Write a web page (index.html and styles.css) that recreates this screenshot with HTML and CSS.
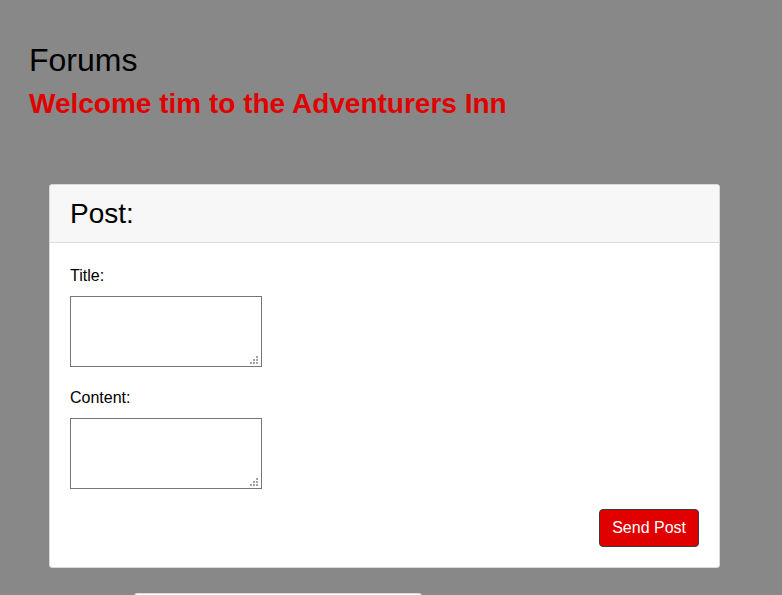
FILE: index.html
```html
<!DOCTYPE html>
<html>
<head>
<meta charset="utf-8">
<title>Forums</title>
<link rel="stylesheet" href="styles.css">
</head>
<body>
<div class="page">
  <h1 class="title">Forums</h1>
  <h2 class="welcome">Welcome tim to the Adventurers Inn</h2>
  <div class="card">
    <div class="card-header">Post:</div>
    <form class="card-body">
      <label class="label" for="t">Title:</label>
      <textarea id="t" class="field"></textarea>
      <label class="label label-second" for="c">Content:</label>
      <textarea id="c" class="field"></textarea>
      <div class="actions">
        <button type="button" class="send">Send Post</button>
      </div>
    </form>
  </div>
  <div class="next-card"></div>
</div>
</body>
</html>
```
FILE: styles.css
```css
html, body {
  margin: 0;
  padding: 0;
  background: #888888;
  height: 100%;
  overflow: hidden;
}
body {
  font-family: "Liberation Sans", Arial, sans-serif;
  color: #000;
}
.page {
  padding-left: 29px;
}
.title {
  margin: 42px 0 0;
  font-size: 32px;
  line-height: 37px;
  font-weight: normal;
}
.welcome {
  margin: 9px 0 0;
  font-size: 28px;
  line-height: 32px;
  font-weight: bold;
  color: #e00000;
}
.card {
  margin: 64px 0 0 20px;
  width: 671px;
  box-sizing: border-box;
  background: #fff;
  border: 1px solid #d9d9d9;
  border-radius: 3px;
  overflow: hidden;
}
.card-header {
  background: #f7f7f7;
  border-bottom: 1px solid #dcdcdc;
  padding: 13px 20px 12px;
  font-size: 28px;
  line-height: 32px;
}
.card-body {
  padding: 24px 20px 20px;
  margin: 0;
}
.label {
  display: block;
  font-size: 16px;
  line-height: 18px;
}
.label-second {
  margin-top: 22px;
}
.field {
  display: block;
  margin-top: 11px;
  width: 192px;
  height: 71px;
  box-sizing: border-box;
  border: 1px solid #767676;
  padding: 2px;
  font-family: "Liberation Mono", monospace;
  font-size: 13px;
  resize: none;
  background-color: #fff;
  background-image: url("data:image/svg+xml,%3Csvg xmlns='http://www.w3.org/2000/svg' width='8' height='8'%3E%3Cg fill='%23a3a3a3'%3E%3Crect x='6' y='0' width='2' height='2'/%3E%3Crect x='3' y='3' width='2' height='2'/%3E%3Crect x='6' y='3' width='2' height='2'/%3E%3Crect x='0' y='6' width='2' height='2'/%3E%3Crect x='3' y='6' width='2' height='2'/%3E%3Crect x='6' y='6' width='2' height='2'/%3E%3C/g%3E%3C/svg%3E");
  background-repeat: no-repeat;
  background-origin: border-box;
  background-position: right 4px bottom 3px;
}
.actions {
  display: flex;
  justify-content: flex-end;
  margin-top: 20px;
}
.send {
  height: 38px;
  box-sizing: border-box;
  padding: 0 12px;
  white-space: nowrap;
  background: #e00000;
  color: #fff;
  border: 1px solid #3a3a3a;
  border-radius: 4px;
  font-family: "Liberation Sans", Arial, sans-serif;
  font-size: 16px;
}
.next-card {
  margin: 25px 0 0 105px;
  width: 286px;
  height: 40px;
  background: #fff;
  border: 1px solid #d9d9d9;
  border-radius: 3px;
}
```
